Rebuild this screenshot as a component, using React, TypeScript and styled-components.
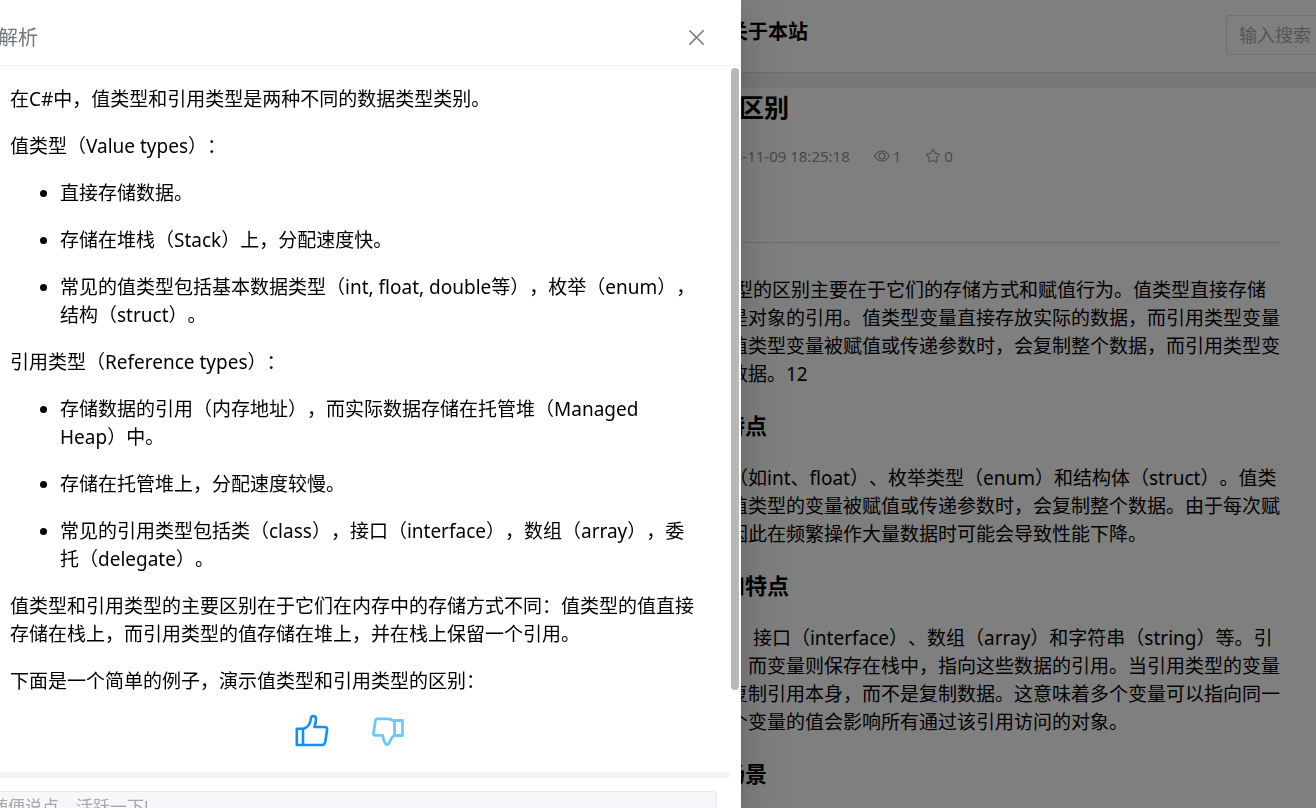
import React from 'react';
import styled, { createGlobalStyle } from 'styled-components';

const GlobalStyle = createGlobalStyle`
  *, *::before, *::after { box-sizing: border-box; }
  body {
    margin: 0;
    overflow: hidden;
    background: #fff;
    color: #000;
    font-family: "Noto Sans", "Noto Sans CJK SC", sans-serif;
    font-size: 19px;
    line-height: 28px;
    text-spacing-trim: space-all;
  }
`;

const Page = styled.div`
  height: 100vh;
  overflow: hidden;
`;

const SiteHeader = styled.header`
  display: flex;
  align-items: center;
  justify-content: space-between;
  height: 73px;
  padding-left: calc(50% + 70px);
  border-bottom: 1px solid #dcdcdc;
`;

const NavLink = styled.a`
  padding-bottom: 8px;
  color: #000;
  font-size: 20px;
  font-weight: 700;
  text-decoration: none;
`;

const SearchInput = styled.input`
  width: 90px;
  height: 40px;
  margin-bottom: 2px;
  padding: 0 0 0 12px;
  border: 1px solid #dcdfe6;
  border-right: 0;
  border-radius: 4px 0 0 4px;
  background: transparent;
  font: inherit;
  font-size: 18px;
  &::placeholder { color: #a8abb2; opacity: 1; }
`;

const Main = styled.main`
  padding-top: 15px;
  background: #f0f0f0;
`;

const Article = styled.article`
  min-height: 100vh;
  padding: 4px 35px 0 calc(50% + 50px);
  background: #fff;
`;

const ArticleTitle = styled.h1`
  margin: 0;
  padding-left: 6px;
  font-size: 25px;
  line-height: 30px;
`;

const Meta = styled.div`
  display: flex;
  gap: 24px;
  padding: 20px 0 72px;
  border-bottom: 1px solid #dcdcdc;
  color: #909399;
  font-size: 15px;
`;

const MetaItem = styled.span`
  display: flex;
  align-items: center;
  gap: 3px;
`;

const Section = styled.section`
  padding-top: 23px;
`;

const SectionTitle = styled.h3`
  margin: 0;
  padding-left: 15px;
  font-size: 22px;
`;

const SectionText = styled.p`
  margin: 25px 0 0;
  padding-left: 21px;
  white-space: nowrap;
`;

const Lead = styled(SectionText)`
  margin-top: 33px;
`;

const Overlay = styled.div`
  position: fixed;
  inset: 0;
  background: rgba(0, 0, 0, 0.5);
`;

const Drawer = styled.aside`
  position: absolute;
  top: 0;
  bottom: 0;
  left: -22px;
  display: flex;
  flex-direction: column;
  width: calc(50% + 105px);
  background: #fff;
  box-shadow: 0 16px 48px 16px rgba(0, 0, 0, 0.08),
    0 12px 32px rgba(0, 0, 0, 0.12), 0 8px 16px -8px rgba(0, 0, 0, 0.16);
`;

const DrawerHeader = styled.header`
  display: flex;
  flex: none;
  align-items: center;
  justify-content: space-between;
  height: 66px;
  padding: 10px 32px 0 20px;
  border-bottom: 1px solid #f0f2f5;
  color: #72767b;
`;

const DrawerTitle = styled.h2`
  margin: 0;
  font-size: 20px;
  font-weight: 400;
`;

const IconButton = styled.button`
  display: flex;
  padding: 0;
  border: 0;
  background: none;
  color: inherit;
  cursor: pointer;
`;

const DrawerBody = styled.div`
  position: relative;
  flex: 1;
  min-height: 0;
  padding-right: 12px;
  overflow: hidden;
`;

const ScrollThumb = styled.div`
  position: absolute;
  top: 2px;
  right: 2px;
  width: 8px;
  height: 622px;
  border-radius: 4px;
  background: #b8b8b8;
`;

const Answer = styled.div`
  padding: 19px 30px 0 32px;
`;

const Paragraph = styled.p`
  margin: 0 0 19px;
`;

const List = styled.ul`
  margin: 0;
  padding-left: 50px;
`;

const ListItem = styled.li`
  margin-bottom: 19px;
`;

const Votes = styled.div`
  display: flex;
  justify-content: center;
  gap: 42px;
  padding: 0 8px 24px 0;
`;

const CommentArea = styled.div`
  padding: 13px 12px 0 0;
  border-top: 6px solid #f0f2f5;
`;

const CommentBox = styled.textarea`
  display: block;
  width: 100%;
  height: 100px;
  padding: 3px 12px;
  border: 1px solid #dfeaf5;
  border-radius: 4px;
  background: #f5f7fa;
  font: inherit;
  font-size: 17px;
  line-height: 24px;
  resize: none;
  &::placeholder { color: #a8a8a8; opacity: 1; }
`;

type GlyphProps = { d: string; size: number };

const Glyph = ({ d, size }: GlyphProps) => (
  <svg width={size} height={size} viewBox="0 0 1024 1024" fill="currentColor" aria-hidden="true">
    <path d={d} />
  </svg>
);

const CLOSE =
  'M764.288 214.592 512 466.88 259.712 214.592a31.936 31.936 0 0 0-45.12 45.12L466.752 512 214.528 764.224a31.936 31.936 0 1 0 45.12 45.184L512 557.184l252.288 252.288a31.936 31.936 0 0 0 45.12-45.12L557.12 512.064l252.288-252.352a31.936 31.936 0 1 0-45.12-45.184z';
const VIEW =
  'M512 160c320 0 512 352 512 352S832 864 512 864 0 512 0 512s192-352 512-352zm0 64c-225.28 0-384.128 208.064-436.8 288 52.608 79.872 211.456 288 436.8 288 225.28 0 384.128-208.064 436.8-288-52.608-79.872-211.456-288-436.8-288zm0 64a224 224 0 1 1 0 448 224 224 0 0 1 0-448zm0 64a160.192 160.192 0 0 0-160 160c0 88.192 71.744 160 160 160s160-71.808 160-160-71.744-160-160-160z';
const STAR =
  'm512 747.84 228.16 119.936a6.4 6.4 0 0 0 9.28-6.72l-43.52-254.08 184.512-179.904a6.4 6.4 0 0 0-3.52-10.88l-255.104-37.12L517.76 147.904a6.4 6.4 0 0 0-11.52 0L392.192 379.072l-255.104 37.12a6.4 6.4 0 0 0-3.52 10.88L318.08 606.976l-43.584 254.08a6.4 6.4 0 0 0 9.28 6.72L512 747.84zM313.6 924.48a70.4 70.4 0 0 1-102.144-74.24l37.888-220.928L88.96 472.96A70.4 70.4 0 0 1 128 352.896l221.76-32.256 99.2-200.96a70.4 70.4 0 0 1 126.208 0l99.2 200.96 221.824 32.256a70.4 70.4 0 0 1 39.04 120.064L774.72 629.376l37.888 220.928a70.4 70.4 0 0 1-102.144 74.24L512 820.096l-198.4 104.32z';

const ThumbUp = () => (
  <svg width="34" height="34" viewBox="0 0 34 34" fill="none" stroke="#1390ee" strokeWidth="2.6" strokeLinejoin="round" aria-hidden="true">
    <path d="M1.8 14.8H8V31H1.8Z" />
    <path d="M8 14.8C13 13.6 15.4 10 15.8 5C16 0.9 21 0.9 21 5C21 8.6 20.2 10.8 19.4 13H29.5C31.6 13 32.4 14.3 32.1 16L30.2 28C29.8 30.2 28.8 31 27 31H8" />
  </svg>
);

const ThumbDown = () => (
  <svg width="34" height="34" viewBox="0 0 34 34" fill="none" stroke="#6cc8ff" strokeWidth="2.8" strokeLinejoin="round" aria-hidden="true">
    <path d="M23.5 6.5H31.5V21.5H23.5Z" />
    <path d="M23.5 7.5C21.5 6 20.5 4.8 17.5 4.8H6.5C5 4.8 4.6 5.4 4.4 6.6L2.6 19C2.3 20.8 2.8 21.4 4.4 21.4H11.8C12.4 25 13.2 27.8 14.6 29.6C15.6 31 17.2 30.8 18 29.2C19.5 26.5 20 23.5 23.5 21.2" />
  </svg>
);

export default function App() {
  return (
    <>
      <GlobalStyle />
      <Page>
        <SiteHeader>
          <NavLink href="#about">关于本站</NavLink>
          <SearchInput type="text" aria-label="输入搜索" placeholder="输入搜索" />
        </SiteHeader>
        <Main>
          <Article>
            <ArticleTitle>的区别</ArticleTitle>
            <Meta>
              <MetaItem>2023-11-09 18:25:18</MetaItem>
              <MetaItem><Glyph d={VIEW} size={16} />1</MetaItem>
              <MetaItem><Glyph d={STAR} size={16} />0</MetaItem>
            </Meta>
            <Lead>
              &nbsp;型的区别主要在于它们的存储方式和赋值行为。值类型直接存储<br />
              是对象的引用。值类型变量直接存放实际的数据，而引用类型变量<br />
              值类型变量被赋值或传递参数时，会复制整个数据，而引用类型变<br />
              数据。12
            </Lead>
            <Section>
              <SectionTitle>特点</SectionTitle>
              <SectionText>
                （如int、float）、枚举类型（enum）和结构体（struct）。值类<br />
                值类型的变量被赋值或传递参数时，会复制整个数据。由于每次赋<br />
                因此在频繁操作大量数据时可能会导致性能下降。
              </SectionText>
            </Section>
            <Section>
              <SectionTitle>和特点</SectionTitle>
              <SectionText>
                &nbsp;、接口（interface）、数组（array）和字符串（string）等。引<br />
                ，而变量则保存在栈中，指向这些数据的引用。当引用类型的变量<br />
                复制引用本身，而不是复制数据。这意味着多个变量可以指向同一<br />
                个变量的值会影响所有通过该引用访问的对象。
              </SectionText>
            </Section>
            <Section>
              <SectionTitle>场景</SectionTitle>
            </Section>
          </Article>
        </Main>
      </Page>
      <Overlay>
        <Drawer role="dialog" aria-labelledby="drawer-title">
          <DrawerHeader>
            <DrawerTitle id="drawer-title">解析</DrawerTitle>
            <IconButton type="button" aria-label="关闭">
              <Glyph d={CLOSE} size={25} />
            </IconButton>
          </DrawerHeader>
          <DrawerBody>
            <Answer>
              <Paragraph>在C#中，值类型和引用类型是两种不同的数据类型类别。</Paragraph>
              <Paragraph>值类型（Value types）：</Paragraph>
              <List>
                <ListItem>直接存储数据。</ListItem>
                <ListItem>存储在堆栈（Stack）上，分配速度快。</ListItem>
                <ListItem>常见的值类型包括基本数据类型（int, float, double等），枚举（enum），结构（struct）。</ListItem>
              </List>
              <Paragraph>引用类型（Reference types）：</Paragraph>
              <List>
                <ListItem>存储数据的引用（内存地址），而实际数据存储在托管堆（Managed Heap）中。</ListItem>
                <ListItem>存储在托管堆上，分配速度较慢。</ListItem>
                <ListItem>常见的引用类型包括类（class），接口（interface），数组（array），委托（delegate）。</ListItem>
              </List>
              <Paragraph>值类型和引用类型的主要区别在于它们在内存中的存储方式不同：值类型的值直接存储在栈上，而引用类型的值存储在堆上，并在栈上保留一个引用。</Paragraph>
              <Paragraph>下面是一个简单的例子，演示值类型和引用类型的区别：</Paragraph>
            </Answer>
            <Votes>
              <IconButton type="button" aria-label="赞"><ThumbUp /></IconButton>
              <IconButton type="button" aria-label="踩"><ThumbDown /></IconButton>
            </Votes>
            <CommentArea>
              <CommentBox aria-label="评论" placeholder="随便说点，活跃一下!" />
            </CommentArea>
            <ScrollThumb />
          </DrawerBody>
        </Drawer>
      </Overlay>
    </>
  );
}
